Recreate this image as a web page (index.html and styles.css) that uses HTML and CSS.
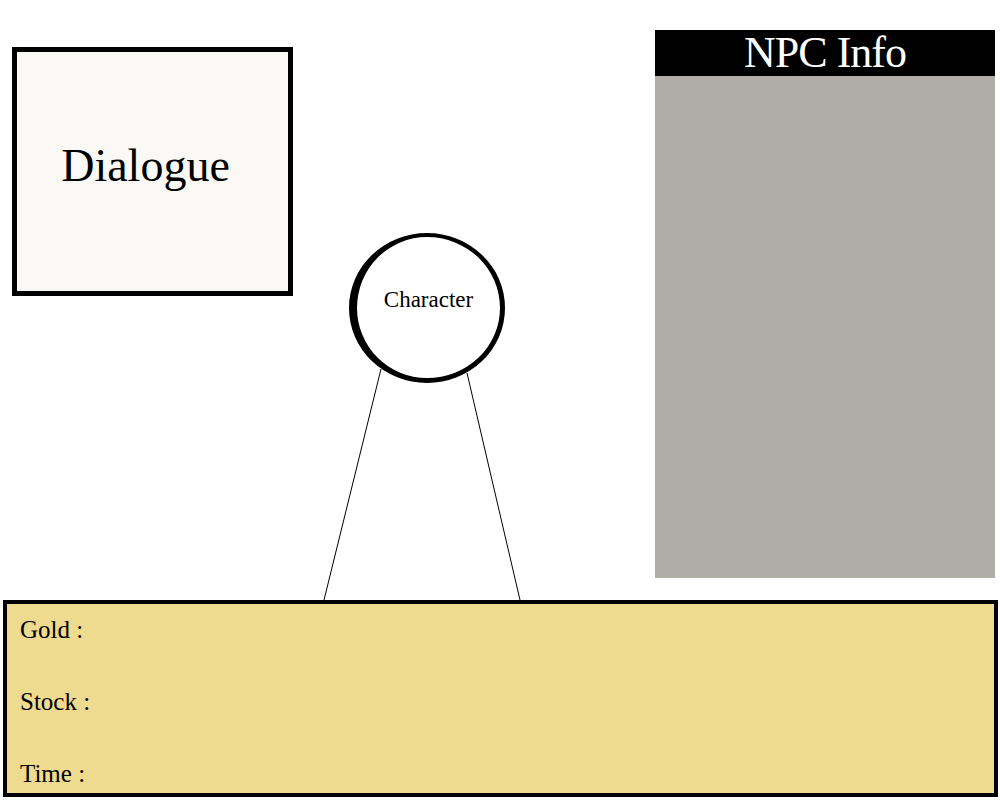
FILE: index.html
```html
<!DOCTYPE html>
<html>
<head>
<meta charset="utf-8">
<link rel="stylesheet" href="styles.css">
</head>
<body>
<div class="stage">
  <svg class="links" width="1000" height="600" viewBox="0 0 1000 600">
    <line x1="381" y1="369" x2="324" y2="600" stroke="#000" stroke-width="1"/>
    <line x1="467" y1="373" x2="520" y2="600" stroke="#000" stroke-width="1"/>
  </svg>
  <div class="dialogue"><span>Dialogue</span></div>
  <div class="character"><span>Character</span></div>
  <div class="npc">
    <div class="npc-head">NPC Info</div>
  </div>
</div>
<div class="bar">
  <div class="row">Gold :</div>
  <div class="row">Stock :</div>
  <div class="row">Time :</div>
</div>
</body>
</html>
```
FILE: styles.css
```css
html, body {
  margin: 0;
  padding: 0;
  background: #fff;
}
body {
  width: 1000px;
  height: 800px;
  overflow: hidden;
  font-family: "Liberation Serif", "Times New Roman", serif;
  color: #000;
}
.stage {
  position: relative;
  height: 600px;
  display: flex;
  align-items: flex-start;
}
.links {
  position: absolute;
  left: 0;
  top: 0;
  pointer-events: none;
}
.dialogue {
  box-sizing: border-box;
  margin: 47px 0 0 12px;
  width: 281px;
  height: 249px;
  border: 5px solid #000;
  background: #faf9f5;
  display: flex;
  align-items: center;
  justify-content: center;
  padding: 0 14px 12px 0;
  font-size: 46px;
}
.character {
  position: relative;
  box-sizing: border-box;
  margin: 233px 0 0 56px;
  width: 156px;
  height: 150px;
  border-radius: 50%;
  border: 4px solid #000;
  border-left-width: 8px;
  border-right-width: 5px;
  border-bottom-width: 5px;
  background: #fff;
  display: flex;
  align-items: center;
  justify-content: center;
  padding: 0 0 16px 0;
  font-size: 23px;
}
.npc {
  margin: 30px 5px 0 auto;
  width: 340px;
  height: 548px;
  background: #b0ada6;
}
.npc-head {
  height: 46px;
  background: #000;
  color: #fff;
  font-size: 44px;
  line-height: 46px;
  text-align: center;
  letter-spacing: -1px;
}
.bar {
  box-sizing: border-box;
  margin: 0 2px 0 3px;
  height: 197px;
  border: 4px solid #000;
  background: #efdb8f;
  padding: 13px 0 0 13px;
  display: flex;
  flex-direction: column;
  gap: 47px;
}
.row {
  font-size: 25px;
  line-height: 25px;
}
```
